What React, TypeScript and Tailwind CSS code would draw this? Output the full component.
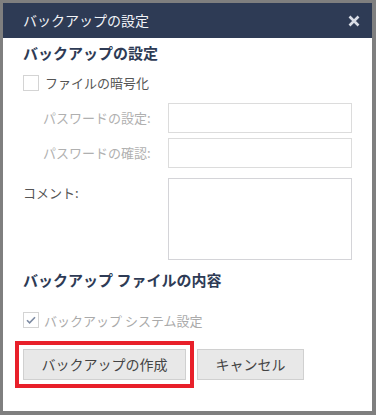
import React from "react";

const font = { fontFamily: '"Noto Sans CJK JP", "Noto Sans", sans-serif' };

function Check({ checked }: { checked?: boolean }) {
  return (
    <span className="flex h-[16px] w-[16px] shrink-0 items-center justify-center border border-[#d4d4d4] bg-white">
      {checked && (
        <svg width="12" height="12" viewBox="0 0 12 12" fill="none">
          <path d="M2 6.2l2.6 2.6L10 3.2" stroke="#7d8ba3" strokeWidth="1.6" />
        </svg>
      )}
    </span>
  );
}

export default function App() {
  return (
    <div className="h-[415px] w-[376px] bg-[#7f7f7f] pt-[3px] pl-[3px] pr-[4px] pb-[4px]" style={font}>
      <div className="flex h-full flex-col bg-white">
        <div className="flex h-[35px] items-center justify-between bg-[#2e3b55] pl-[20px] pr-[12px]">
          <span className="text-[14px] text-[#f2f4f8]">バックアップの設定</span>
          <svg width="12" height="12" viewBox="0 0 12 12">
            <path d="M1.5 1.5l9 9M10.5 1.5l-9 9" stroke="#d9dde6" strokeWidth="2.6" />
          </svg>
        </div>

        <div className="flex flex-col px-[20px]">
          <h2 className="mt-[4px] text-[15px] font-bold leading-[22px] text-[#2e3b55]">バックアップの設定</h2>

          <label className="mt-[9px] flex items-center gap-[6px] text-[13px] text-[#555]">
            <Check />
            ファイルの暗号化
          </label>

          <div className="mt-[10px] flex items-center">
            <span className="w-[145px] pl-[20px] text-[13px] text-[#b0b0b0]">パスワードの設定:</span>
            <div className="h-[30px] w-[185px] border border-[#dcdcdc]" />
          </div>
          <div className="mt-[5px] flex items-center">
            <span className="w-[145px] pl-[20px] text-[13px] text-[#b0b0b0]">パスワードの確認:</span>
            <div className="h-[30px] w-[185px] border border-[#dcdcdc]" />
          </div>
          <div className="mt-[10px] flex items-start">
            <span className="mt-[5px] w-[145px] text-[13px] text-[#555]">コメント:</span>
            <div className="h-[82px] w-[185px] border border-[#d4d4d8]" />
          </div>

          <h2 className="mt-[9px] text-[15px] font-bold leading-[22px] text-[#2e3b55]">バックアップ ファイルの内容</h2>

          <label className="mt-[20px] flex items-center gap-[5px] text-[13px] text-[#aaa]">
            <Check checked />
            バックアップ システム設定
          </label>

          <div className="mt-[19px] flex gap-[11px]">
            <button className="h-[31px] w-[163px] border border-[#d0d0d0] bg-[#e8e8e8] text-[14px] text-[#444] outline-4 outline-offset-4 outline-[#e8202a]">
              バックアップの作成
            </button>
            <button className="h-[31px] w-[107px] border border-[#d0d0d0] bg-[#e8e8e8] text-[14px] text-[#444]">
              キャンセル
            </button>
          </div>
        </div>
      </div>
    </div>
  );
}
